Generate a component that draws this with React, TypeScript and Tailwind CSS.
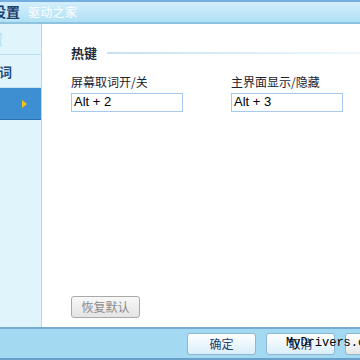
import { useState } from "react";

const font = { fontFamily: '"Noto Sans CJK SC", "Liberation Sans", sans-serif' };

export default function App() {
    const [keyA, setKeyA] = useState("Alt + 2");
    const [keyB, setKeyB] = useState("Alt + 3");

    return (
        <div className="w-[360px] h-[360px] flex flex-col overflow-hidden bg-white text-[12px]" style={font}>
            {/* title bar */}
            <div className="h-[24px] shrink-0 flex items-center border-t-2 border-t-[#74aede] border-b-2 border-b-[#8ec3e0] bg-gradient-to-b from-[#d3eefb] to-[#b1e1f6] relative">
                <span className="absolute -left-[8px] top-[2px] font-bold text-[14px] text-[#1d3f6a] leading-none">设置</span>
                <span className="absolute left-[28px] top-[4px] text-[12px] text-white leading-none tracking-wide">驱动之家</span>
            </div>

            <div className="flex flex-1 min-h-0">
                {/* sidebar */}
                <div className="w-[42px] shrink-0 bg-[#e0f4fc] border-r border-r-[#b3dbea] flex flex-col">
                    <div className="h-[31px] border-b border-b-[#b8dff0] flex items-center">
                        <span className="-ml-[10px] text-[13px] font-bold text-[#b8dff0]">置</span>
                    </div>
                    <div className="h-[31px] mt-[2px] border-b border-b-[#c8e7f4] flex items-center">
                        <span className="-ml-[1px] text-[13px] font-bold text-[#234a7a]">词</span>
                    </div>
                    <div className="h-[32px] bg-[#3e8ed2] border-b border-b-[#2f6fb0] flex items-center justify-end pr-[14px]">
                        <svg width="5" height="8" viewBox="0 0 5 8"><path d="M0 0 L5 4 L0 8 Z" fill="#f5c21b" /></svg>
                    </div>
                </div>

                {/* content */}
                <div className="flex-1 flex flex-col pl-[29px] pt-[19px] pb-[9px]">
                    <div className="flex items-center gap-[10px]">
                        <span className="font-bold text-[13px] text-[#1e2a38]">热键</span>
                        <div className="flex-1 h-[2px] bg-gradient-to-r from-[#c6e2f3] to-[#eef7fc]"></div>
                    </div>
                    <div className="flex gap-[48px] mt-[9px]">
                        <div className="flex flex-col">
                            <span className="text-[#1c2330] leading-[20px]">屏幕取词开/关</span>
                            <input value={keyA} onChange={(e) => setKeyA(e.target.value)} className="mt-[1px] w-[112px] h-[19px] border border-[#a6c9ee] px-[2px] text-[13px] text-black outline-none" style={{ fontFamily: '"Liberation Sans", sans-serif' }} />
                        </div>
                        <div className="flex flex-col">
                            <span className="text-[#1c2330] leading-[20px]">主界面显示/隐藏</span>
                            <input value={keyB} onChange={(e) => setKeyB(e.target.value)} className="mt-[1px] w-[112px] h-[19px] border border-[#a6c9ee] px-[2px] text-[13px] text-black outline-none" style={{ fontFamily: '"Liberation Sans", sans-serif' }} />
                        </div>
                    </div>
                    <div className="flex-1"></div>
                    <button className="w-[69px] h-[22px] border border-[#a9a9a9] rounded-[3px] bg-gradient-to-b from-[#f8f8f8] to-[#e4e4e4] text-[#8b8b8b] text-[12px]">恢复默认</button>
                </div>
            </div>

            {/* footer */}
            <div className="h-[33px] shrink-0 bg-[#a3d9f1] border-t-2 border-t-[#76acd3] border-b-2 border-b-[#6aa1cb] flex items-center pl-[187px] gap-[10px] relative">
                <button className="w-[69px] h-[22px] rounded-[3px] border border-[#8fb6d2] bg-gradient-to-b from-[#ffffff] to-[#d9eefa] text-[#25406a] text-[12px] shrink-0">确定</button>
                <button className="w-[69px] h-[22px] rounded-[3px] border border-[#8fb6d2] bg-gradient-to-b from-[#ffffff] to-[#d9eefa] text-[#25406a] text-[12px] shrink-0">取消</button>
                <button className="w-[30px] h-[22px] rounded-[3px] border border-[#8fb6d2] bg-gradient-to-b from-[#ffffff] to-[#e6e6e6] shrink-0"></button>
                <span className="absolute left-[286px] top-[8px] text-[12px] text-black leading-none" style={{ fontFamily: '"Liberation Mono", monospace' }}>MyDrivers.com</span>
            </div>
        </div>
    );
}
